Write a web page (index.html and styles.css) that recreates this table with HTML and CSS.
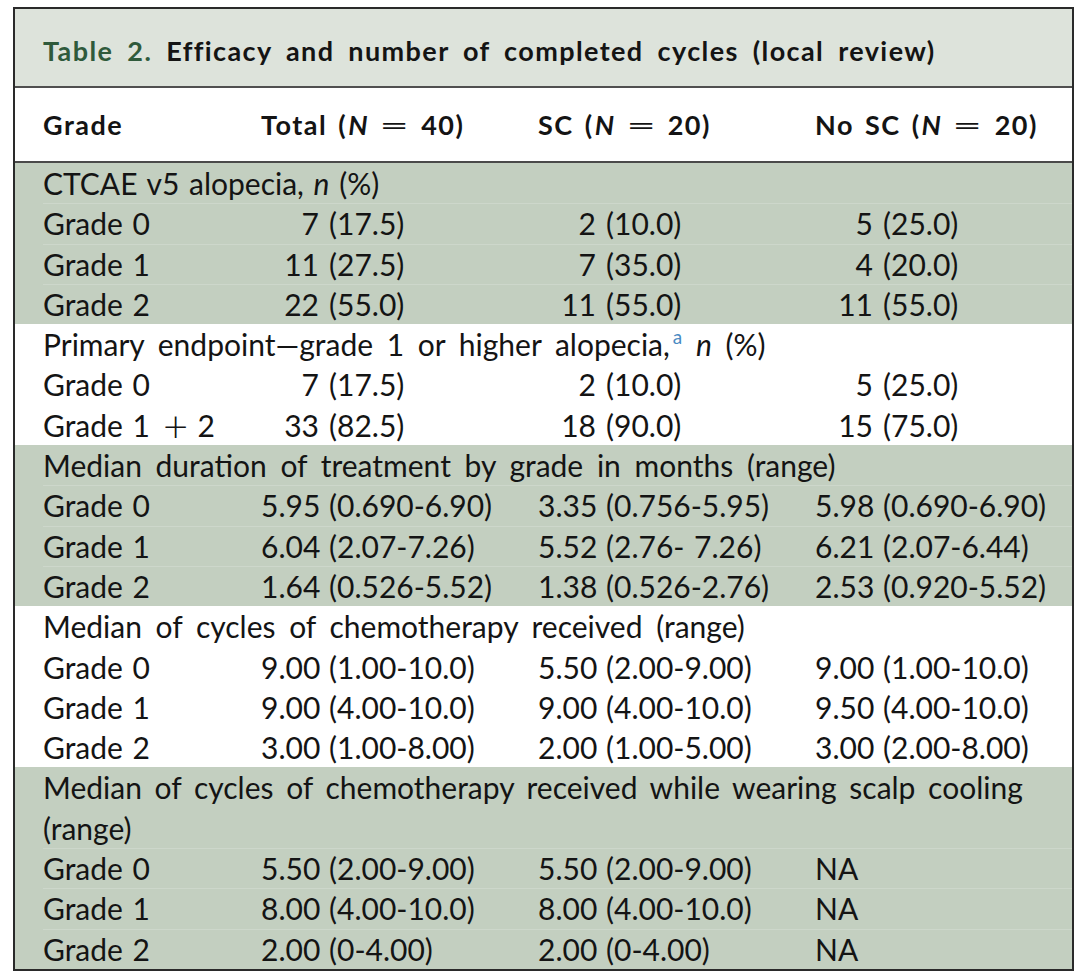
FILE: index.html
```html
<!DOCTYPE html>
<html lang="en">
<head>
<meta charset="utf-8">
<title>Table 2</title>
<link rel="stylesheet" href="styles.css">
</head>
<body>
<div class="table">
  <div class="caption"><span class="label">Table 2.</span><span class="cap-text">Efficacy and number of completed cycles (local review)</span></div>

  <div class="head">
    <div class="hc">Grade</div>
    <div class="hc">Total (<i>N</i><span class="eq">=</span>40)</div>
    <div class="hc">SC (<i>N</i><span class="eq">=</span>20)</div>
    <div class="hc">No SC (<i>N</i><span class="eq">=</span>20)</div>
  </div>

  <div class="section green">
    <div class="sh tight">CTCAE v5 alopecia, <i>n</i> (%)</div>
    <div class="row"><div>Grade 0</div><div><span class="pre">7</span>(17.5)</div><div><span class="pre">2</span>(10.0)</div><div><span class="pre">5</span>(25.0)</div></div>
    <div class="row"><div>Grade 1</div><div><span class="pre">11</span>(27.5)</div><div><span class="pre">7</span>(35.0)</div><div><span class="pre">4</span>(20.0)</div></div>
    <div class="row"><div>Grade 2</div><div><span class="pre">22</span>(55.0)</div><div><span class="pre">11</span>(55.0)</div><div><span class="pre">11</span>(55.0)</div></div>
  </div>

  <div class="section white">
    <div class="sh">Primary endpoint—grade 1 or higher alopecia,<sup class="fn">a</sup> <i>n</i> (%)</div>
    <div class="row"><div>Grade 0</div><div><span class="pre">7</span>(17.5)</div><div><span class="pre">2</span>(10.0)</div><div><span class="pre">5</span>(25.0)</div></div>
    <div class="row"><div>Grade 1<span class="plus">+</span>2</div><div><span class="pre">33</span>(82.5)</div><div><span class="pre">18</span>(90.0)</div><div><span class="pre">15</span>(75.0)</div></div>
  </div>

  <div class="section green">
    <div class="sh">Median duration of treatment by grade in months (range)</div>
    <div class="row"><div>Grade 0</div><div><span class="pre">5.95</span>(0.690-6.90)</div><div><span class="pre">3.35</span>(0.756-5.95)</div><div><span class="pre">5.98</span>(0.690-6.90)</div></div>
    <div class="row"><div>Grade 1</div><div><span class="pre">6.04</span>(2.07-7.26)</div><div><span class="pre">5.52</span>(2.76- 7.26)</div><div><span class="pre">6.21</span>(2.07-6.44)</div></div>
    <div class="row"><div>Grade 2</div><div><span class="pre">1.64</span>(0.526-5.52)</div><div><span class="pre">1.38</span>(0.526-2.76)</div><div><span class="pre">2.53</span>(0.920-5.52)</div></div>
  </div>

  <div class="section white">
    <div class="sh">Median of cycles of chemotherapy received (range)</div>
    <div class="row"><div>Grade 0</div><div><span class="pre">9.00</span>(1.00-10.0)</div><div><span class="pre">5.50</span>(2.00-9.00)</div><div><span class="pre">9.00</span>(1.00-10.0)</div></div>
    <div class="row"><div>Grade 1</div><div><span class="pre">9.00</span>(4.00-10.0)</div><div><span class="pre">9.00</span>(4.00-10.0)</div><div><span class="pre">9.50</span>(4.00-10.0)</div></div>
    <div class="row"><div>Grade 2</div><div><span class="pre">3.00</span>(1.00-8.00)</div><div><span class="pre">2.00</span>(1.00-5.00)</div><div><span class="pre">3.00</span>(2.00-8.00)</div></div>
  </div>

  <div class="section green last">
    <div class="sh long">Median of cycles of chemotherapy received while wearing scalp cooling<br>(range)</div>
    <div class="row"><div>Grade 0</div><div><span class="pre">5.50</span>(2.00-9.00)</div><div><span class="pre">5.50</span>(2.00-9.00)</div><div>NA</div></div>
    <div class="row"><div>Grade 1</div><div><span class="pre">8.00</span>(4.00-10.0)</div><div><span class="pre">8.00</span>(4.00-10.0)</div><div>NA</div></div>
    <div class="row"><div>Grade 2</div><div><span class="pre">2.00</span>(0-4.00)</div><div><span class="pre">2.00</span>(0-4.00)</div><div>NA</div></div>
  </div>
</div>
</body>
</html>
```

FILE: styles.css
```css
html, body {
  margin: 0;
  padding: 0;
  background: #ffffff;
}

body {
  font-family: "Lato", "Open Sans", sans-serif;
  color: #141414;
}

.table {
  margin: 7px 0 0 13px;
  width: 1061px;
  box-sizing: border-box;
  border: 2px solid #2a2a2a;
}

.caption {
  height: 79px;
  box-sizing: border-box;
  padding: 6px 28px 0;
  display: flex;
  align-items: center;
  background: #dde3db;
  border-bottom: 2px solid #505050;
  font-size: 27px;
  font-weight: 700;
  letter-spacing: 1.4px;
  word-spacing: 6px;
  white-space: nowrap;
}

.caption .label {
  color: #2f5a3b;
  margin-right: 14px;
}

.head {
  display: grid;
  grid-template-columns: 218px 277px 277px 1fr;
  align-items: center;
  height: 73px;
  padding-left: 28px;
  background: #ffffff;
  border-bottom: 2px solid #4a4a4a;
  font-size: 27px;
  font-weight: 700;
  letter-spacing: 1.5px;
  word-spacing: 3px;
  white-space: nowrap;
}

.hc i {
  font-style: italic;
  margin-left: 1px;
}

.eq {
  display: inline-block;
  margin: 0 17px 0 18px;
  font-weight: 400;
  transform: scaleX(1.9);
}

.section {
  padding-left: 28px;
  font-size: 30px;
  line-height: 40.3px;
}

.green {
  background: #c3cfc0;
}

.white {
  background: #ffffff;
}

.sh {
  word-spacing: 6px;
  white-space: nowrap;
}

.sh.tight {
  word-spacing: 2px;
}

.sh.long {
  word-spacing: 5px;
}

.row {
  display: grid;
  grid-template-columns: 218px 277px 277px 1fr;
  white-space: nowrap;
  word-spacing: 2px;
}

.green .row {
  box-shadow: inset 0 1px 0 rgba(255, 255, 255, 0.18);
}

.pre {
  display: inline-block;
  width: 68px;
  box-sizing: border-box;
  padding-right: 10px;
  text-align: right;
}

.plus {
  display: inline-block;
  margin: 0 13px 0 17px;
  font-weight: 300;
  transform: scale(1.45);
}

.fn {
  color: #4a8ac2;
  font-size: 19px;
  line-height: 0;
  vertical-align: 12px;
  margin-left: 3px;
  word-spacing: 0;
}
```
